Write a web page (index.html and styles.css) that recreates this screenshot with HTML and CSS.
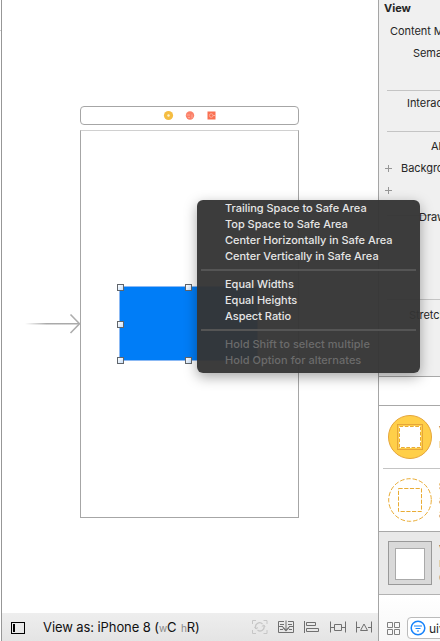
FILE: index.html
```html
<!DOCTYPE html>
<html lang="en">
<head>
<meta charset="utf-8">
<title>Interface Builder</title>
<link rel="stylesheet" href="styles.css">
</head>
<body>
<div class="window">
  <div class="gutter"></div>
  <main class="editor">
    <section class="canvas">
      <div class="scene-dock">
        <svg width="54" height="11" viewBox="0 0 54 11">
          <circle cx="6.500" cy="5.500" r="4.600" fill="#f5bd42"/><circle cx="6.500" cy="5.500" r="1.200" fill="#fff3cf"/>
          <circle cx="28" cy="5.500" r="4.200" fill="#fb8068"/><path d="M24.500 5H28M26 7.500h2M30 4.500v4" stroke="#ffa896" fill="none"/>
          <rect x="45.500" y="1.500" width="8" height="8" fill="#f97052"/><circle cx="49.200" cy="5.500" r="1.800" stroke="#ffae9c" fill="none"/><path d="M51 5.500h2" stroke="#ffae9c"/>
        </svg>
      </div>
      <div class="device"></div>
      <svg class="entry" width="56" height="22" viewBox="0 0 56 22">
        <defs><linearGradient id="fade"><stop offset="0" stop-color="#aaa" stop-opacity="0"/><stop offset=".4" stop-color="#aaa"/></linearGradient></defs>
        <rect x="0" y="10" width="54" height="1.500" fill="url(#fade)"/>
        <path d="M45.500 1.500L54.500 10.700L45.500 20" fill="none" stroke="#adadad" stroke-width="1.600"/>
      </svg>
      <div class="selected-view">
        <i class="handle tl"></i><i class="handle tc"></i><i class="handle ml"></i><i class="handle bl"></i><i class="handle bc"></i>
      </div>
    </section>
    <footer class="bar">
      <svg class="outline" width="14" height="12" viewBox="0 0 14 12"><rect x=".5" y=".5" width="13" height="11" fill="none" stroke="#000"/><path d="M2 2h2v8H2z"/></svg>
      <span class="view-as">View as: iPhone 8 (<small>w</small>C <small class="h">h</small>R)</span>
      <div class="tools">
        <svg width="16" height="14" viewBox="0 0 16 14" fill="none" stroke="#c6c6c6"><path d="M.5 4V.5H4M11.500 .5H15V4M15 10v3.500h-3.500M4 13.500H.5V10"/><path d="M4 8.500A4 4 0 0 1 10.500 4M11.800 5.500A4 4 0 0 1 5.500 10" stroke-width="1.300"/><path d="M2.500 7L4 9l2-1.500M9.800 6.500L11.800 5l1.400 2"/></svg>
        <svg width="16" height="14" viewBox="0 0 16 14" fill="none" stroke="#707070"><path d="M6 1.500H.5v11h15v-11H10M0 6.500h5M11 6.500h5M2 4.500h4M10 4.500h4M2 9.500h3M11 9.500h3M8 .5v10"/><path d="M4.800 7.300L8 10.500l3.200-3.200" stroke-width="1.300"/></svg>
        <svg width="16" height="14" viewBox="0 0 16 14" fill="none" stroke="#707070"><path d="M.5 1v12M2.500 2.500h9v3h-9zM2.500 8.500h12v3h-12z"/></svg>
        <svg width="16" height="14" viewBox="0 0 16 14" fill="none" stroke="#707070"><path d="M.5 1.500v11M15.500 1.500v11M1 7.500h3M12 7.500h3M4.500 4.500h7v6h-7z"/></svg>
        <svg width="16" height="14" viewBox="0 0 16 14" fill="none" stroke="#707070"><path d="M.5 1.500v11M15.500 1.500v11M1 7.500h3M12 7.500h3M8 4l3.500 6.500h-7z"/></svg>
      </div>
    </footer>
  </main>

  <aside class="side">
    <section class="inspector">
      <div class="group g1"><h2>View</h2><div class="row mode">Content Mode</div><div class="row semantic">Semantic</div></div>
      <div class="group g2"><div class="row interaction">Interaction</div></div>
      <div class="group g3">
        <div class="row alpha">Alpha</div>
        <div class="row color"><i class="plus"></i>Background</div>
        <div class="row tint"><i class="plus"></i></div>
      </div>
      <div class="group g4"><div class="row drawing">Drawing</div></div>
      <div class="group g5"><div class="row stretching">Stretching</div></div>
    </section>
    <div class="library-tabs"></div>
    <section class="library">
      <div class="item first">
        <svg width="44" height="44" viewBox="0 0 44 44"><circle cx="22" cy="22" r="21.500" fill="#ffcf49" stroke="#e5a53b"/><rect x="9.500" y="9.500" width="25" height="25" fill="#ffcf49" stroke="#e5a53b"/><rect x="11" y="11" width="22" height="22" fill="#fff"/><rect x="11.500" y="11.500" width="21" height="21" fill="none" stroke="#e9ac35" stroke-dasharray="3.700 1.550"/></svg>
        <p><b>V</b><br>r</p>
      </div>
      <div class="item second">
        <svg width="44" height="44" viewBox="0 0 44 44" fill="none" stroke="#e9ac35"><circle cx="22" cy="22" r="21.300" stroke-dasharray="4.500 1.900"/><rect x="10.500" y="10.500" width="23" height="23" stroke-dasharray="4.200 1.500"/></svg>
        <p><b>S</b><br>a<br>a</p>
      </div>
      <div class="item picked">
        <div class="view-icon"></div>
        <p><b>V</b><br>r<br>c</p>
      </div>
    </section>
    <div class="filter">
      <svg width="13" height="13" viewBox="0 0 13 13" fill="none" stroke="#808080"><path d="M.5.5h5v5h-5zM7.500.5h5v5h-5zM.5 7.500h5v5h-5zM7.500 7.500h5v5h-5z"/></svg>
      <div class="search">
        <svg width="16" height="16" viewBox="0 0 16 16" fill="none" stroke="#1683fb"><circle cx="8" cy="8" r="6.800" stroke-width="1.500"/><path d="M4 6h8M5.500 8.500h5M7 11h2" stroke-width="1.200"/></svg>
        <span>uiview</span>
      </div>
    </div>
  </aside>

  <div class="menu">
    <ul><li>Trailing Space to Safe Area</li><li>Top Space to Safe Area</li><li>Center Horizontally in Safe Area</li><li>Center Vertically in Safe Area</li></ul>
    <hr>
    <ul><li>Equal Widths</li><li>Equal Heights</li><li>Aspect Ratio</li></ul>
    <hr>
    <ul class="hint"><li>Hold Shift to select multiple</li><li>Hold Option for alternates</li></ul>
  </div>
</div>
</body>
</html>
```

FILE: styles.css
```css
* { box-sizing: border-box; }
body, h2, p, ul { margin: 0; padding: 0; }
body { font-family: Inter, "Liberation Sans", sans-serif; font-size: 11px; color: #262626; background: #fff; overflow: hidden; }
svg { display: block; flex: none; }

.window { position: relative; display: flex; width: 440px; height: 641px; overflow: hidden; }
.gutter { flex: none; width: 2px; border-right: 1px solid #979797; background: linear-gradient(#fff 30px, #ccc 30px, #ccc 31px, #fff 31px); }
.editor { flex: none; width: 376px; display: flex; flex-direction: column; }
.canvas { position: relative; flex: 1; background: #fff; }

.scene-dock { position: absolute; left: 78px; top: 106px; width: 219px; height: 19px; border: 1px solid #a6a6a6; border-radius: 4px; display: flex; align-items: center; padding-left: 81px; }
.device { position: absolute; left: 78px; top: 130px; width: 219px; height: 388px; border: 1px solid #a6a6a6; border-top-color: #d0d0d0; }
.entry { position: absolute; left: 23px; top: 313px; }
.selected-view { position: absolute; left: 117px; top: 286px; width: 139px; height: 75px; background: #007df7; border: 1px solid #8bb9f4; }
.handle { position: absolute; width: 7px; height: 7px; border: 1px solid #60656b; background: linear-gradient(135deg, #fff, #c9e0fa); }
.tl { left: -3px; top: -3px; }
.tc { left: 65px; top: -3px; }
.ml { left: -3px; top: 34px; }
.bl { left: -3px; top: 70px; }
.bc { left: 65px; top: 70px; }

.bar { height: 28px; padding: 0 6px 0 9px; display: flex; align-items: center; background: linear-gradient(#eee, #e4e4e4); }
.outline { margin-top: 2px; }
.view-as { margin-left: 18px; font-size: 13px; letter-spacing: -0.09px; color: #111; white-space: nowrap; }
.view-as small { font-size: 10px; color: #888; }
.view-as .h { margin-left: 1px; }
.tools { margin-left: auto; display: flex; gap: 10px; }

.side { flex: none; width: 62px; border-left: 1px solid #a5a5a5; display: flex; flex-direction: column; overflow: hidden; }
.inspector { height: 377px; background: #f0f0f0; border-bottom: 1px solid #a8a8a8; }
.group { margin-left: 8px; border-bottom: 1px solid #c4c4c4; }
.g1 { height: 91px; }
.g2 { height: 41px; padding-top: 1px; }
.g3 { height: 84px; padding-top: 3px; }
.g4 { height: 84px; }
.g5 { height: 76px; padding-top: 4px; border: 0; }
h2 { margin-left: -3px; height: 20px; font-size: 11px; line-height: 16px; }
.row { height: 22px; line-height: 22px; white-space: nowrap; letter-spacing: -0.05px; }
.mode { margin-left: 3px; }
.semantic { margin-left: 26px; }
.interaction { margin-left: 20px; }
.alpha { margin-left: 44px; }
.color, .tint { display: flex; align-items: center; margin-left: -3px; }
.plus { flex: none; width: 9px; height: 9px; margin-right: 8px; background: linear-gradient(#969696, #969696) center / 7px 1px no-repeat, linear-gradient(#969696, #969696) center / 1px 7px no-repeat; }
.drawing { margin-left: 32px; line-height: 2px; height: 2px; }
.stretching { margin-left: 22px; }

.library-tabs { height: 29px; border-bottom: 1px solid #a8a8a8; }
.item { display: flex; align-items: center; padding-left: 9px; }
.item p { margin-left: 7px; color: #777; line-height: 14px; }
.item b { color: #555; }
.first { height: 63px; margin-left: 4px; padding-left: 5px; border-bottom: 1px solid #c4c4c4; }
.second { height: 62px; }
.picked { height: 64px; background: #e9e9e9; border-top: 1px solid #a8a8a8; border-bottom: 1px solid #b2b2b2; }
.view-icon { flex: none; width: 44px; height: 44px; padding: 6px; border: 1px solid #999; background: #d9d9d9; }
.view-icon::before { content: ""; display: block; height: 30px; border: 1px solid #aaa; background: #fff; }

.filter { height: 46px; padding: 22px 0 0 8px; display: flex; align-items: flex-start; background: linear-gradient(#fff, #f7f7f7); }
.filter > svg { margin-top: 5px; }
.search { flex: none; width: 80px; height: 22px; margin-left: 7px; padding-left: 2px; display: flex; align-items: center; border: 1px solid #bbb; border-radius: 4px; background: #fff; }
.search span { margin-left: 3px; font-size: 12px; }

.menu { position: absolute; left: 197px; top: 200px; width: 223px; height: 173px; border-radius: 6px; background: rgba(52, 52, 52, .96); box-shadow: 0 4px 13px rgba(0, 0, 0, .35); color: #e6e6e6; font-weight: 500; letter-spacing: -0.02px; }
.menu ul { list-style: none; padding-left: 28px; }
.menu li { height: 16px; line-height: 16px; white-space: nowrap; }
.menu hr { height: 2px; margin: 5px 4px; border: 0; background: #555; }
.menu .hint { color: #6b6b6b; letter-spacing: 0.03px; }
```
